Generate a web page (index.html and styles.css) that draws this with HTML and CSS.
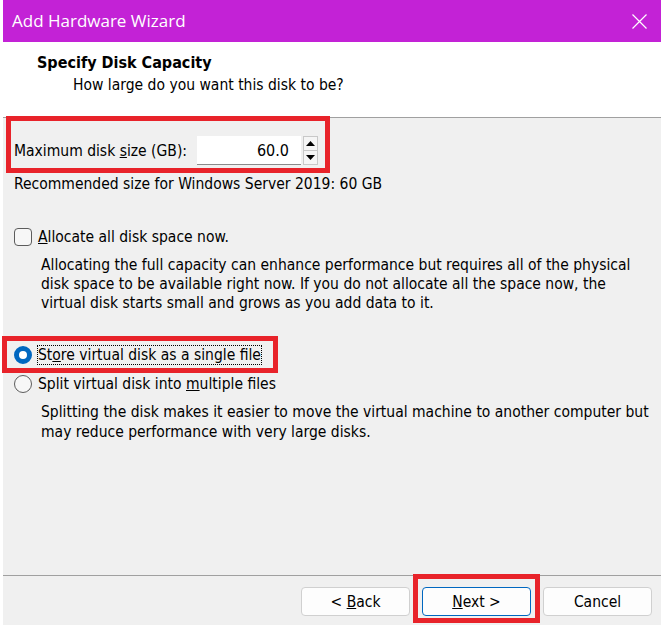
FILE: index.html
```html
<!DOCTYPE html>
<html>
<head>
<meta charset="utf-8">
<link rel="stylesheet" href="styles.css">
</head>
<body>
<div class="window">
  <div class="titlebar">
    <span class="title">Add Hardware Wizard</span>
    <svg class="close" width="15" height="15" viewBox="0 0 15 15"><path d="M0.5 0.5 L14.5 14.5 M14.5 0.5 L0.5 14.5" stroke="#fff" stroke-width="1.2" fill="none"/></svg>
  </div>
  <div class="header">
    <h1>Specify Disk Capacity</h1>
    <p>How large do you want this disk to be?</p>
  </div>
  <div class="content">
    <div class="mark mark-size">
      <div class="size-row">
        <span class="label">Maximum disk <u>s</u>ize (GB):</span>
        <span class="input">60.0</span>
        <span class="spin">
          <span class="spin-btn"><svg width="9" height="5" viewBox="0 0 9 5"><path d="M4.5 0 L9 5 L0 5 Z" fill="#000"/></svg></span>
          <span class="spin-btn"><svg width="9" height="5" viewBox="0 0 9 5"><path d="M0 0 L9 0 L4.5 5 Z" fill="#000"/></svg></span>
        </span>
      </div>
    </div>
    <p class="rec">Recommended size for Windows Server 2019: 60 GB</p>
    <div class="option check-row">
      <span class="checkbox"></span>
      <span><u>A</u>llocate all disk space now.</span>
    </div>
    <p class="desc">Allocating the full capacity can enhance performance but requires all of the physical disk space to be available right now. If you do not allocate all the space now, the virtual disk starts small and grows as you add data to it.</p>
    <div class="mark mark-radio">
      <div class="option">
        <span class="radio on"></span>
        <span class="focus">St<u>o</u>re virtual disk as a single file</span>
      </div>
    </div>
    <div class="option radio-two">
      <span class="radio"></span>
      <span>Split virtual disk into <u>m</u>ultiple files</span>
    </div>
    <p class="desc desc-two">Splitting the disk makes it easier to move the virtual machine to another computer but may reduce performance with very large disks.</p>
  </div>
  <div class="footer">
    <button class="btn">&lt; <u>B</u>ack</button>
    <div class="mark mark-next"><button class="btn default"><u>N</u>ext &gt;</button></div>
    <button class="btn">Cancel</button>
  </div>
</div>
</body>
</html>
```
FILE: styles.css
```css
html, body {
  margin: 0;
  padding: 0;
  background: #ffffff;
}
body {
  font-family: "DejaVu Sans Condensed", "DejaVu Sans", sans-serif;
  font-size: 15.5px;
  color: #000;
  width: 661px;
  height: 625px;
  overflow: hidden;
}
.window {
  margin-left: 3px;
  height: 625px;
  display: flex;
  flex-direction: column;
}
.titlebar {
  height: 42px;
  flex: none;
  background: #c322d6;
  color: #fff;
  display: flex;
  align-items: center;
  justify-content: space-between;
  padding: 0 14px 0 9px;
  font-family: "Open Sans", "Noto Sans", sans-serif;
  font-size: 17px;
}
.title { line-height: 24px; }
.close { display: block; }
.header {
  height: 75px;
  flex: none;
  box-sizing: border-box;
  padding: 10px 0 0 34px;
  background: #fff;
}
.header h1 {
  margin: 0;
  font-size: 16px;
  font-weight: bold;
  line-height: 21px;
}
.header p {
  margin: 2px 0 0 36px;
  line-height: 21px;
}
.content {
  flex: none;
  height: 458px;
  box-sizing: border-box;
  background: #f0f0f0;
  border-top: 1px solid #a0a0a0;
  padding-left: 11px;
}
.mark {
  border: 5px solid #e8232a;
  box-sizing: border-box;
}
.mark-size {
  margin: -2px 0 0 -8px;
  width: 324px;
  height: 57px;
  padding: 15px 0 0 3px;
}
.size-row {
  display: flex;
  align-items: center;
  height: 29px;
}
.label { width: 183px; flex: none; }
.input {
  width: 104px;
  height: 29px;
  box-sizing: border-box;
  background: #fff;
  border-bottom: 1px solid #8a8a8a;
  text-align: right;
  padding-right: 12px;
  line-height: 29px;
  font-size: 16px;
}
.spin {
  margin-left: 2px;
  width: 15px;
  height: 29px;
  display: flex;
  flex-direction: column;
}
.spin-btn {
  flex: 1;
  border: 1px solid #c8c8c8;
  background: #f5f5f5;
  display: flex;
  align-items: center;
  justify-content: center;
}
.spin-btn + .spin-btn { border-top: none; }
.spin-btn svg { display: block; }
p { margin: 0; }
.rec {
  margin-top: 2px;
  line-height: 19px;
}
.option {
  display: flex;
  align-items: center;
  gap: 6px;
  height: 19px;
}
.check-row { margin-top: 33px; }
.checkbox {
  width: 18px;
  height: 18px;
  box-sizing: border-box;
  border: 1px solid #5c5c5c;
  border-radius: 4px;
  background: #f7f7f7;
  flex: none;
}
.radio {
  width: 18px;
  height: 18px;
  box-sizing: border-box;
  border: 1px solid #5c5c5c;
  border-radius: 50%;
  background: #f7f7f7;
  flex: none;
}
.radio.on {
  border: 5px solid #0067c0;
  background: #fff;
}
.desc {
  margin: 10px 8px 0 27px;
  line-height: 19px;
}
.mark-radio {
  margin: 23px 0 0 -12px;
  width: 276px;
  height: 37px;
  padding: 4px 0 0 7px;
}
.focus {
  outline: 1px dotted #000;
  outline-offset: 0px;
  line-height: 18px;
}
.radio-two { margin-top: 1px; height: 19px; }
.desc-two { margin-top: 9px; line-height: 20px; }
.footer {
  flex: 1;
  background: #f0f0f0;
  border-top: 1px solid #a0a0a0;
  display: flex;
  justify-content: flex-end;
  align-items: flex-start;
  gap: 3px;
  padding: 11px 9px 0 0;
}
.btn {
  width: 109px;
  height: 29px;
  border: 1px solid #d0d0d0;
  border-radius: 4px;
  background: #fdfdfd;
  font-family: "DejaVu Sans Condensed", "DejaVu Sans", sans-serif;
  font-size: 15.5px;
  color: #000;
  padding: 0;
}
.btn.default { border-color: #0067c0; }
.mark-next {
  margin-top: -13px;
  padding: 8px 4px 2px 4px;
}
```
